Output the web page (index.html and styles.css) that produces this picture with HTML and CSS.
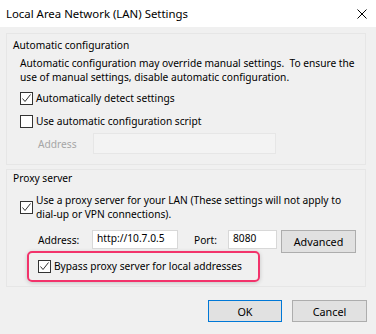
FILE: index.html
```html
<!DOCTYPE html>
<html lang="en">
<head>
    <meta charset="UTF-8">
    <title>Local Area Network (LAN) Settings</title>
    <link rel="stylesheet" href="styles.css">
</head>
<body>
    <div class="dialog">
        <!-- Title bar -->
        <div class="titlebar">
            <span class="title">Local Area Network (LAN) Settings</span>
            <svg class="close" width="10" height="10" viewBox="0 0 10 10">
                <path d="M0.5 0.5 L9.5 9.5 M9.5 0.5 L0.5 9.5" stroke="#000" stroke-width="1"/>
            </svg>
        </div>

        <div class="content">
            <!-- Automatic configuration -->
            <div class="group group-auto">
                <div class="group-title">Automatic configuration</div>
                <p class="note">Automatic configuration may override manual settings.&nbsp; To ensure the<br>use of manual settings, disable automatic configuration.</p>

                <label class="check-row first">
                    <svg class="checkbox" width="13" height="13" viewBox="0 0 13 13">
                        <rect x="0.5" y="0.5" width="12" height="12" fill="#fff" stroke="#333"/>
                        <path d="M2.5 6.5 L5 9.5 L10.5 2.5" fill="none" stroke="#333" stroke-width="1"/>
                    </svg>
                    <span>Automatically detect settings</span>
                </label>

                <label class="check-row">
                    <svg class="checkbox" width="13" height="13" viewBox="0 0 13 13">
                        <rect x="0.5" y="0.5" width="12" height="12" fill="#fff" stroke="#333"/>
                    </svg>
                    <span>Use automatic configuration script</span>
                </label>

                <div class="script-row">
                    <span class="script-label">Address</span>
                    <span class="field field-disabled"></span>
                </div>
            </div>

            <!-- Proxy server -->
            <div class="group group-proxy">
                <div class="group-title">Proxy server</div>

                <label class="check-row proxy-check">
                    <svg class="checkbox" width="13" height="13" viewBox="0 0 13 13">
                        <rect x="0.5" y="0.5" width="12" height="12" fill="#fff" stroke="#333"/>
                        <path d="M2.5 6.5 L5 9.5 L10.5 2.5" fill="none" stroke="#333" stroke-width="1"/>
                    </svg>
                    <span>Use a proxy server for your LAN (These settings will not apply to<br>dial-up or VPN connections).</span>
                </label>

                <div class="proxy-row">
                    <span class="proxy-label addr-label">Address:</span>
                    <span class="field addr-field">http://10.7.0.5</span>
                    <span class="proxy-label port-label">Port:</span>
                    <span class="field port-field">8080</span>
                    <button class="btn btn-advanced">Advanced</button>
                </div>

                <div class="highlight">
                    <label class="check-row">
                        <svg class="checkbox" width="13" height="13" viewBox="0 0 13 13">
                            <rect x="0.5" y="0.5" width="12" height="12" fill="#fff" stroke="#333"/>
                            <path d="M2.5 6.5 L5 9.5 L10.5 2.5" fill="none" stroke="#333" stroke-width="1"/>
                        </svg>
                        <span>Bypass proxy server for local addresses</span>
                    </label>
                </div>
            </div>

            <div class="actions">
                <button class="btn btn-default">OK</button>
                <button class="btn">Cancel</button>
            </div>
        </div>
    </div>
</body>
</html>
```

FILE: styles.css
```css
* {
    margin: 0;
    padding: 0;
    box-sizing: border-box;
}

body {
    font-family: 'Noto Sans', 'Open Sans', sans-serif;
    font-size: 10.2px;
    color: #000;
    background: #f0f0f0;
}

.dialog {
    width: 376px;
    height: 334px;
    background: #f0f0f0;
    overflow: hidden;
}

.titlebar {
    height: 27px;
    background: #fff;
    display: flex;
    align-items: center;
    justify-content: space-between;
    padding: 0 9px 0 6px;
}

.title {
    font-size: 11.4px;
}

.content {
    padding: 6px 10px 0 6px;
}

.group {
    border: 1px solid #e6e6e6;
    padding-left: 6px;
}

.group-title {
    height: 15px;
    line-height: 15px;
}

.group-auto {
    height: 132px;
    padding-top: 4px;
}

.group-proxy {
    height: 118px;
    margin-top: 4px;
    padding-top: 1px;
}

.note {
    margin: 3px 0 0 7px;
    height: 28px;
    line-height: 14px;
    white-space: nowrap;
}

.check-row {
    display: flex;
    align-items: center;
    gap: 3px;
    height: 15px;
    line-height: 15px;
    margin-left: 7px;
    margin-top: 8px;
    white-space: nowrap;
}

.check-row.first {
    margin-top: 7px;
}

.checkbox {
    flex-shrink: 0;
}

.script-row {
    display: flex;
    align-items: center;
    margin: 4px 0 0 25px;
}

.script-label {
    width: 55px;
    color: #a6a6a6;
}

.field {
    display: block;
    height: 19px;
    background: #fff;
    border: 1px solid #d8d8d8;
    padding: 0 4px;
    line-height: 15px;
    white-space: nowrap;
}

.field-disabled {
    width: 183px;
    height: 21px;
    background: #f3f3f3;
    border-color: #e6e6e6;
}

.proxy-check {
    height: 28px;
    margin-top: 7px;
    line-height: 14px;
}

.proxy-row {
    display: flex;
    align-items: flex-start;
    margin: 9px 0 0 25px;
}

.proxy-label {
    line-height: 19px;
    padding-top: 1px;
}

.addr-label {
    width: 54px;
}

.addr-field {
    width: 86px;
}

.port-label {
    width: 34px;
    margin-left: 16px;
}

.port-field {
    width: 49px;
}

.btn {
    font-family: inherit;
    font-size: 10.8px;
    width: 75px;
    height: 22px;
    background: #e1e1e1;
    border: 1px solid #adadad;
    color: #000;
}

.btn-advanced {
    height: 23px;
    margin-left: 4px;
}

.btn-default {
    width: 74px;
    border-color: #0078d7;
}

.highlight {
    width: 233px;
    height: 31px;
    margin: -2px 0 0 14px;
    border: 2px solid #f2336b;
    border-radius: 5px;
    box-shadow: 0 1px 4px rgba(0, 0, 0, 0.18);
    display: flex;
    align-items: center;
    padding-left: 2px;
}

.highlight .check-row {
    margin-top: 0;
}

.actions {
    display: flex;
    justify-content: flex-end;
    gap: 10px;
    margin: 13px -1px 0 0;
}
```
